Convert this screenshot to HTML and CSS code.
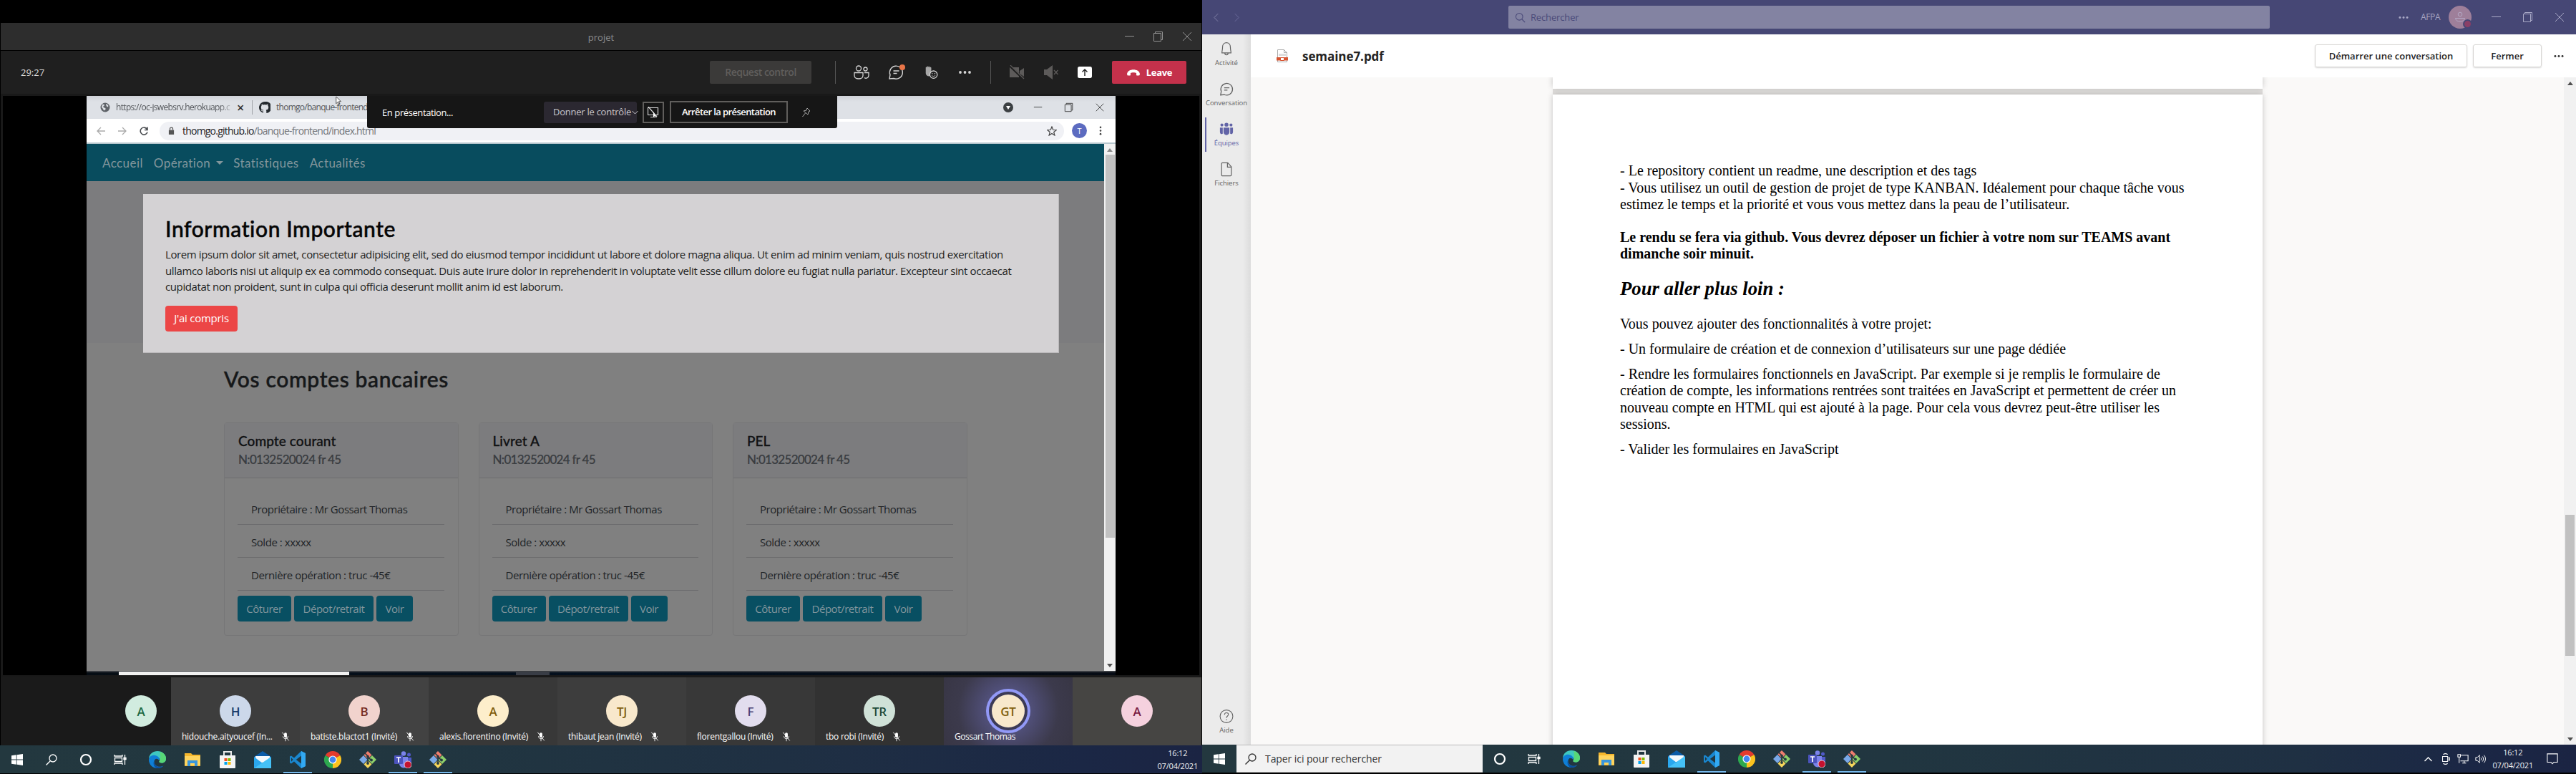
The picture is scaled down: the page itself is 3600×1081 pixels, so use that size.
FILE: index.html
```html
<!DOCTYPE html>
<html lang="fr">
<head>
<meta charset="utf-8">
<title>projet</title>
<link rel="stylesheet" href="styles.css">
</head>
<body>
<svg class="defs" width="0" height="0" aria-hidden="true">
  <symbol id="win" viewBox="0 0 16 16"><path d="M0 2.2 6.8 1.3v6.2H0zM7.6 1.2 16 0v7.5H7.6zM0 8.4h6.8v6.3L0 13.8zM7.6 8.4H16V16l-8.4-1.2z" fill="currentColor"/></symbol>
  <symbol id="ring" viewBox="0 0 18 18"><circle cx="9" cy="9" r="7" fill="none" stroke="currentColor" stroke-width="2.2"/></symbol>
  <symbol id="taskview" viewBox="0 0 18 18"><path d="M1 2v2h11V2M1 16v-2h11v2M1.500 6.500h10v5h-10zM15.500 2v14M14 6.500h3v2h-3z" fill="none" stroke="currentColor" stroke-width="1.300"/></symbol>
  <symbol id="search" viewBox="0 0 18 18"><circle cx="11" cy="7" r="5" fill="none" stroke="currentColor" stroke-width="1.300"/><path d="M7.300 10.800 1.500 16.500" stroke="currentColor" stroke-width="1.400"/></symbol>
  <symbol id="search-r" viewBox="0 0 18 18"><circle cx="7.500" cy="7.500" r="5.800" fill="none" stroke="currentColor" stroke-width="1.300"/><path d="m12 12 5 5" stroke="currentColor" stroke-width="1.300"/></symbol>
  <symbol id="edge" viewBox="0 0 24 24"><path d="M12 0c7 0 12 5 12 10.500 0 4-3 6-6 6-2.500 0-3.800-1-3.500-2 1.500-2 .8-5.500-3-5.500C6 9 2 12 .2 9.500 1 4 6 0 12 0z" fill="#3fc8c0"/><path d="M15 1c6 1 9 5 9 9.500 0 4-3 6-6 6-2.500 0-3.800-1-3.500-2 1.500-2 2.500-8 .5-13.500z" fill="#58d776"/><path d="M0 12C.5 7 5 5 9 6c4 .8 6.500 4 5.500 7-3-4-7-2.500-7 2 0 5 6 9 13 5.500C18 23 15 24 12 24 5 24 0 18.500 0 12z" fill="#0f7fd6"/><path d="M8 12c-2 3 0 9 6 10 3 .4 5.500-.5 7-1.800C18 23 15 24 12 24c-5-1-7-7-4-12z" fill="#0c4f9e"/></symbol>
  <symbol id="folder" viewBox="0 0 22 20"><path d="M0 1h9l2 2h11v16H0z" fill="#f5b62c"/><path d="M0 5h22v13H0z" fill="#ffd45e"/><path d="M4 11h14v8h-4v-4H8v4H4z" fill="#3a96dd"/></symbol>
  <symbol id="store" viewBox="0 0 22 24"><path d="M6 6V1h10v5" fill="none" stroke="#e8e8e8" stroke-width="2"/><path d="M0 6h22v17a1 1 0 0 1-1 1H1a1 1 0 0 1-1-1z" fill="#f4f4f4"/><path d="M6.500 10h4v4h-4z" fill="#f25022"/><path d="M11.500 10h4v4h-4z" fill="#7fba00"/><path d="M6.500 15h4v4h-4z" fill="#00a4ef"/><path d="M11.500 15h4v4h-4z" fill="#ffb900"/></symbol>
  <symbol id="mail" viewBox="0 0 24 24"><path d="M0 8 12 0l12 8v5H0z" fill="#0a5ba8"/><path d="M2 7h20v9H2z" fill="#f3f8fc"/><path d="M0 8l12 9 12-9v16H0z" fill="#2aa7ee"/><path d="M0 24 24 8v16z" fill="#45c1f7"/></symbol>
  <symbol id="vscode" viewBox="0 0 24 24"><path d="M17 0 7 9.500 3 6.400 1 7.400v9.200l2 1 4-3.100L17 24l6-3V3zm0 6.500v11L9.800 12zM3 9.300 5.600 12 3 14.700z" fill="#1a87cf" fill-rule="evenodd"/><path d="m17 0 6 3v18l-6 3z" fill="#32a9f2"/></symbol>
  <symbol id="chrome" viewBox="0 0 24 24"><path d="M12 12 1.600 6A12 12 0 0 1 22.400 6z" fill="#e33b2e"/><path d="M12 12 22.400 6A12 12 0 0 1 12 24z" fill="#fcc31e"/><path d="M12 12v12A12 12 0 0 1 1.600 6z" fill="#2da94f"/><circle cx="12" cy="12" r="5.600" fill="#fff"/><circle cx="12" cy="12" r="4.400" fill="#4285f4"/></symbol>
  <symbol id="git" viewBox="0 0 24 24"><path d="m12 0 5.500 5.500L12 11 6.500 5.500z" fill="#f07e6e"/><path d="m6 6 5.500 6L6 18 0 12z" fill="#7ba9e8"/><path d="m18 6 6 6-6 6-5.500-6z" fill="#8ecf6a"/><path d="m12 13 5.500 5.500L12 24l-5.500-5.500z" fill="#f5d65c"/><path d="M8 3l4 4v11M12 8l5 5" fill="none" stroke="#263a42" stroke-width="1.700"/><circle cx="12" cy="7.500" r="1.800" fill="#263a42"/><circle cx="12" cy="17" r="1.900" fill="#263a42"/><circle cx="17" cy="12.500" r="1.900" fill="#263a42"/></symbol>
  <symbol id="teams" viewBox="0 0 24 24"><circle cx="13" cy="3.500" r="3.200" fill="#7b83eb"/><circle cx="20.500" cy="5" r="2.500" fill="#5059c9"/><path d="M16 9h8v7a4 4 0 0 1-8 2z" fill="#5059c9"/><path d="M7 8h12v9a6 6 0 0 1-12 1z" fill="#7b83eb"/><rect y="6" width="12" height="12" rx="1" fill="#4b53bc"/><path d="M3 9h6M6 9v7" stroke="#fff" stroke-width="1.700"/><circle cx="19" cy="19" r="5" fill="#c4122f" stroke="#e9c3cb"/></symbol>
  <symbol id="ie" viewBox="0 0 24 24"><path d="M20 15.500A8.300 8.300 0 1 1 20.300 12H8" fill="none" stroke="#3fbcf2" stroke-width="4"/><path d="M2 22C-1 17 10 3 21 1.500c3 0 2.500 3 1.500 5" fill="none" stroke="#f5c62d" stroke-width="1.800"/></symbol>
  <symbol id="outlook" viewBox="0 0 22 22"><path d="M10 5h12v12H10z" fill="#fff"/><path d="m13 9 3 4 5-6" fill="none" stroke="#0a6cc8" stroke-width="1.500"/><path d="M0 3 13 0v22L0 19z" fill="#0a6cc8"/><ellipse cx="6.500" cy="11" rx="3" ry="3.800" fill="none" stroke="#fff" stroke-width="1.800"/></symbol>
  <symbol id="skype" viewBox="0 0 22 22"><circle cx="7" cy="7" r="6.500" fill="#14a8ec"/><circle cx="15" cy="15" r="6.500" fill="#14a8ec"/><circle cx="11" cy="11" r="9" fill="#14a8ec"/><path d="M15 7.500C13 5 7.500 5.500 7.500 8.300c0 3.700 7.500 1.700 7.500 5.200 0 3-6 3.500-8.300.5" fill="none" stroke="#fff" stroke-width="2.500"/></symbol>
  <symbol id="firefox" viewBox="0 0 22 22"><circle cx="11" cy="11" r="10.500" fill="#e66000"/><circle cx="12" cy="8.500" r="7.500" fill="#2b7fd0"/><path d="M1 6c1 2 3 1 5 1l3 3c-2 1-1 4 2 4 4 1 8-1 8-6l1-3c3 8 0 16-9 16.500C2 21.500-1 13 1 6z" fill="#f58a1c"/></symbol>
  <symbol id="micoff" viewBox="0 0 14 18"><rect x="4.500" y="1.500" width="5" height="9" rx="2.500" fill="currentColor"/><path d="M2.500 8c0 6 9 6 9 0M7 12.500V17M1 1l12 15" fill="none" stroke="currentColor" stroke-width="1.200"/></symbol>
  <symbol id="min" viewBox="0 0 16 16"><path d="M1 7.500h13" stroke="currentColor"/></symbol>
  <symbol id="restore" viewBox="0 0 16 16"><path d="M1.500 3.500h10v11h-10zM3.500 3V1.500h10v11H12" fill="none" stroke="currentColor"/></symbol>
  <symbol id="close" viewBox="0 0 16 16"><path d="m2 2 12 12M14 2 2 14" stroke="currentColor"/></symbol>
  <symbol id="dots" viewBox="0 0 18 6"><circle cx="2.500" cy="3" r="1.900"/><circle cx="9" cy="3" r="1.900"/><circle cx="15.500" cy="3" r="1.900"/></symbol>
  <symbol id="chat" viewBox="0 0 22 22"><path d="M2 20l1-5.500A9 9 0 1 1 8 19.500zM7.500 9h8M7.500 12.500h5" fill="none" stroke="currentColor" stroke-width="1.400"/></symbol>
  <symbol id="up" viewBox="0 0 12 8"><path d="m1 7 5-5 5 5" fill="none" stroke="currentColor" stroke-width="1.300"/></symbol>
  <symbol id="net" viewBox="0 0 18 16"><path d="M5 2h12v9H5M8 14.500h6M11 11v3.500M1 1h4v4H1zM3 5v9.500" fill="none" stroke="currentColor" stroke-width="1.200"/></symbol>
  <symbol id="vol" viewBox="0 0 18 16"><path d="M1 5.500h2.500L7 2v12l-3.500-3.500H1zM9 6c1 1 1 3 0 4M11.500 4c2 2 2 6 0 8M14 2c3 3 3 9 0 12" fill="none" stroke="currentColor" stroke-width="1.100"/></symbol>
</svg>

<div class="desk">
  <section class="screen left">
    <div class="void"></div>
    <div class="meeting">
      <header class="mtitle"><span></span><span>projet</span>
        <div class="wbtns"><svg><use href="#min"/></svg><svg><use href="#restore"/></svg><svg><use href="#close"/></svg></div>
      </header>
      <div class="mtools">
        <span class="timer">29:27</span>
        <button class="request">Request control</button>
        <div class="mgroup">
          <svg viewBox="0 0 22 20"><g fill="none" stroke="currentColor" stroke-width="1.300"><circle cx="7" cy="4.500" r="3.500"/><circle cx="16.500" cy="5.500" r="2.500"/><path d="M1 10.500h12v4c0 6-12 6-12 0zM15 10.500h6v4c0 3.500-4 4.500-6 3"/></g></svg>
          <svg class="w24" viewBox="0 0 26 22"><use href="#chat" width="22" height="22"/><circle cx="20" cy="4" r="4" fill="#e97548"/></svg>
          <svg viewBox="0 0 22 22"><path d="M3 12V4c0-1.500 2-1.500 2 0 0-3 2-3 2-.5 0-2.500 2.500-2 2.500.5 0-1.500 2-1 2 .5V9l-3 8C5 17 3 15 3 12z" fill="currentColor" opacity=".75"/><circle cx="15" cy="14.500" r="5.700" fill="#1f1f1f" stroke="currentColor" stroke-width="1.400"/><path d="M12.500 15.500c1 2.500 4 2.500 5 0" fill="none" stroke="currentColor"/><circle cx="13" cy="13" r=".8" fill="currentColor"/><circle cx="17" cy="13" r=".8" fill="currentColor"/></svg>
          <svg class="mdots"><use href="#dots" fill="#d6d6d6"/></svg>
        </div>
        <div class="mgroup g2">
          <svg class="off" viewBox="0 0 22 20"><path d="M1 3h13v14H1zM15 8l6-4v12l-6-4z" fill="currentColor"/><path d="m1 1 19 18" stroke="#1f1f1f" stroke-width="3"/><path d="m2 0 19 19" stroke="currentColor" stroke-width="1.200"/></svg>
          <svg class="off" viewBox="0 0 22 20"><path d="M1 6h4l8-6v20l-8-6H1z" fill="currentColor"/><path d="m15 7 5.500 6M20.500 7 15 13" stroke="currentColor" stroke-width="1.300"/></svg>
          <svg class="share" viewBox="0 0 20 16"><rect width="20" height="16" rx="2.500" fill="#fff"/><path d="M10 13V4M6.500 7.500 10 4l3.500 3.500" fill="none" stroke="#1f1f1f" stroke-width="1.400"/></svg>
        </div>
        <button class="leave"><svg viewBox="0 0 20 10"><path d="M0 7C1-2 19-2 20 7l-.5 2c-.3.800-5 .8-5-.5V5.500c-2-1.200-7-1.200-9 0V8.500c0 1.300-4.700 1.300-5 .5z" fill="#fff"/></svg>Leave</button>
      </div>
      <div class="stage">
        <div class="presenter">Gossart Thomas</div>
        <div class="shared">
          <div class="tabs">
            <div class="tab t1"><svg viewBox="0 0 14 14"><circle cx="7" cy="7" r="6.500" fill="#5f6368"/><path d="M3 3c3-1 4 1 2 2s0 2 2 3-1 4-2 3-1-3-3-4zM8 2c3 1 4 3 3 4s-3-1-3-4z" fill="#dee1e6"/></svg><span>https://oc-jswebsrv.herokuapp.c</span><b>×</b></div>
            <div class="tab t2"><svg viewBox="0 0 16 16"><path d="M8 0a8 8 0 0 0-2.500 15.600c.4 0 .5-.2.500-.5v-1.600c-2 .4-2.700-1-2.900-1.600-.3-.5-.7-.9-.2-1 1 0 1.500 1.500 2.500 1.600.5 0 .8-.2.900-.7-2-.4-3.500-1-3.500-4 0-.9.300-1.600.8-2.200-.2-.7 0-1.500.2-2.100.800 0 1.500.4 2.100.9a8 8 0 0 1 4.200 0c.6-.5 1.300-.9 2.100-.9.200.6.300 1.400.1 2.100.6.600.9 1.300.9 2.200 0 3-1.600 3.600-3.500 4 .4.400.6 1 .6 1.700v2c0 .3.200.6.500.5A8 8 0 0 0 8 0z" fill="#24292e"/></svg><span>thomgo/banque-frontend</span></div>
            <div class="cwin"><svg class="drop" viewBox="0 0 14 14"><circle cx="7" cy="7" r="7" fill="#3c4043"/><path d="M4 5h6l-3 5z" fill="#fff"/></svg><svg><use href="#min"/></svg><svg><use href="#restore"/></svg><svg><use href="#close"/></svg></div>
            <div class="banner">
              <span class="bp">En présentation...</span>
              <span class="give">Donner le contrôle<svg viewBox="0 0 8 6"><path d="m0 1 4 4 4-4" fill="none" stroke="currentColor"/></svg></span>
              <span class="noscreen"><svg viewBox="0 0 16 16"><path d="M.5 1.500h14v10H.5zM4 14.500h7M1 0l12 14" fill="none" stroke="#ddd" stroke-width="1.200"/><path d="M8 7v8l2-2 3 3z" fill="#fff"/></svg></span>
              <span class="stop">Arrêter la présentation</span>
              <svg class="pin" viewBox="0 0 12 14"><path d="m7 1 4 4-2 1-1 4-6-5 4-1zM4.500 8 .5 13" fill="none" stroke="#aaa"/></svg>
            </div>
            <svg class="cursor" viewBox="0 0 12 18"><path d="M1 1v13l3-3 2 5 2-1-2-5h4z" fill="#fff" stroke="#222"/></svg>
          </div>
          <div class="urlbar">
            <svg class="dim" viewBox="0 0 12 12"><path d="M12 6H1M6 1 1 6l5 5" fill="none" stroke="currentColor" stroke-width="1.300"/></svg>
            <svg class="dim" viewBox="0 0 12 12"><path d="M0 6h11M6 1l5 5-5 5" fill="none" stroke="currentColor" stroke-width="1.300"/></svg>
            <svg viewBox="0 0 12 12"><path d="M10.500 3.500A5 5 0 1 0 11 7.500M11 .5v4H7" fill="none" stroke="currentColor" stroke-width="1.600"/></svg>
            <div class="url"><svg viewBox="0 0 10 12"><path d="M1 5h8v7H1z" fill="currentColor"/><path d="M2.800 5V3c0-2.500 4.400-2.500 4.400 0v2" fill="none" stroke="currentColor" stroke-width="1.400"/></svg><span>thomgo.github.io<i>/banque-frontend/index.html</i></span><svg class="star" viewBox="0 0 14 14"><path d="m7 1 1.700 4.300 4.500.3-3.500 2.900 1.200 4.500L7 10.500 3.100 13l1.200-4.500L.8 5.600l4.500-.3z" fill="none" stroke="currentColor" stroke-width="1.200"/></svg></div>
            <span class="user">T</span>
            <svg class="kebab" viewBox="0 0 4 14"><circle cx="2" cy="2" r="1.400"/><circle cx="2" cy="7" r="1.400"/><circle cx="2" cy="12" r="1.400"/></svg>
          </div>
          <div class="web">
            <div class="site">
              <nav class="nav"><a>Accueil</a><a>Opération</a><i class="caret"></i><a>Statistiques</a><a>Actualités</a></nav>
              <div class="hero">
                <div class="modal">
                  <h1>Information Importante</h1>
                  <p><span>Lorem ipsum dolor sit amet, consectetur adipisicing elit, sed do eiusmod tempor incididunt ut labore et dolore magna aliqua. Ut enim ad minim veniam, quis nostrud exercitation</span><br>ullamco laboris nisi ut aliquip ex ea commodo consequat. Duis aute irure dolor in reprehenderit in voluptate velit esse cillum dolore eu fugiat nulla pariatur. Excepteur sint occaecat<br>cupidatat non proident, sunt in culpa qui officia deserunt mollit anim id est laborum.</p>
                  <button>J'ai compris</button>
                </div>
              </div>
              <div class="accounts">
                <h1>Vos comptes bancaires</h1>
                <div class="cards">
                  <article><header><h2>Compte courant</h2><h3>N:0132520024 fr 45</h3></header><ul><li>Propriétaire : Mr Gossart Thomas</li><li>Solde : xxxxx</li><li>Dernière opération : truc -45€</li></ul><div class="acts"><button>Côturer</button><button>Dépot/retrait</button><button>Voir</button></div></article>
                  <article><header><h2>Livret A</h2><h3>N:0132520024 fr 45</h3></header><ul><li>Propriétaire : Mr Gossart Thomas</li><li>Solde : xxxxx</li><li>Dernière opération : truc -45€</li></ul><div class="acts"><button>Côturer</button><button>Dépot/retrait</button><button>Voir</button></div></article>
                  <article><header><h2>PEL</h2><h3>N:0132520024 fr 45</h3></header><ul><li>Propriétaire : Mr Gossart Thomas</li><li>Solde : xxxxx</li><li>Dernière opération : truc -45€</li></ul><div class="acts"><button>Côturer</button><button>Dépot/retrait</button><button>Voir</button></div></article>
                </div>
              </div>
            </div>
            <div class="sbar"><i class="tri-up"></i><i class="thumb"></i><i class="tri-down"></i></div>
          </div>
          <div class="stask">
            <span class="sstart"><svg><use href="#win"/></svg></span>
            <div class="ssearch"><svg class="cort"><use href="#ring"/></svg><span>Taper ici pour rechercher</span><svg class="mic" viewBox="0 0 12 18"><rect x="3" y="1" width="6" height="11" rx="1.500" fill="none" stroke="#333" stroke-width="1.200"/><path d="M1 10v2c0 3 10 3 10 0v-2M6 14v3M3 17h6" fill="none" stroke="#333" stroke-width="1.200"/></svg></div>
            <div class="sapps"><span><svg class="s16"><use href="#taskview"/></svg></span><span><svg><use href="#folder"/></svg></span><span><svg><use href="#ie"/></svg></span><span><svg><use href="#outlook"/></svg></span><span><svg><use href="#skype"/></svg></span><span class="active"><svg><use href="#chrome"/></svg></span><span class="open"><svg><use href="#firefox"/></svg></span></div>
            <div class="stray">
              <svg viewBox="0 0 14 16"><path d="M1 15c0-6 6-6 6 0M7 8c0-5 6-5 6 1" fill="none" stroke="currentColor" stroke-width="1.200"/><circle cx="4" cy="8.500" r="2" fill="none" stroke="currentColor"/><circle cx="10" cy="3" r="2" fill="none" stroke="currentColor"/></svg>
              <svg class="chev"><use href="#up"/></svg>
              <svg viewBox="0 0 16 12"><path d="M3 11.500a3 3 0 0 1-.5-5.800A5 5 0 0 1 11.500 4c2.500 0 4 2 4 4s-1 3.500-3 3.500z" fill="#1c86e0"/></svg>
              <svg viewBox="0 0 16 14"><path d="M1 1v5h3V1M2.500 6v5" stroke="currentColor" fill="none"/><path d="M5 4h9v8H4V8h1z" fill="#fff"/></svg>
              <svg><use href="#net"/></svg><svg><use href="#vol"/></svg>
              <div class="clock"><span>16:12</span><span>07/04/2021</span></div>
              <div class="notif"><svg viewBox="0 0 16 16"><path d="M0 0h15v12H7l-3 4v-4H0z" fill="#fff"/><path d="M2.500 3h10M2.500 6h10M2.500 9h6" stroke="#111"/></svg><b>1</b></div>
            </div>
          </div>
        </div>
        <div class="side"></div>
      </div>
      <div class="people">
        <div class="p self"><span class="av green">A</span></div>
        <div class="p a"><span class="av blue">H</span><label>hidouche.aityoucef (In...<svg><use href="#micoff"/></svg></label></div>
        <div class="p b"><span class="av red">B</span><label>batiste.blactot1 (Invité)<svg><use href="#micoff"/></svg></label></div>
        <div class="p c"><span class="av yel">A</span><label>alexis.fiorentino (Invité)<svg><use href="#micoff"/></svg></label></div>
        <div class="p a"><span class="av tan">TJ</span><label>thibaut jean (Invité)<svg><use href="#micoff"/></svg></label></div>
        <div class="p c"><span class="av lil">F</span><label>florentgallou (Invité)<svg><use href="#micoff"/></svg></label></div>
        <div class="p d"><span class="av mint">TR</span><label>tbo robi (Invité)<svg><use href="#micoff"/></svg></label></div>
        <div class="p talk"><span class="av tan">GT</span><label>Gossart Thomas</label></div>
        <div class="p last"><span class="av pink">A</span></div>
      </div>
    </div>
    <footer class="task">
      <span class="tb"><svg class="i16"><use href="#win"/></svg></span><span class="tb"><svg class="i18"><use href="#search"/></svg></span><span class="tb"><svg class="i18"><use href="#ring"/></svg></span><span class="tb"><svg class="i18"><use href="#taskview"/></svg></span>
      <div class="apps"><span><svg><use href="#edge"/></svg></span><span><svg><use href="#folder"/></svg></span><span><svg><use href="#store"/></svg></span><span><svg><use href="#mail"/></svg></span><span class="open"><svg><use href="#vscode"/></svg></span><span><svg><use href="#chrome"/></svg></span><span><svg><use href="#git"/></svg></span><span class="open"><svg><use href="#teams"/></svg></span><span class="open"><svg><use href="#git"/></svg></span></div>
      <div class="clock end"><span>16:12</span><span>07/04/2021</span></div>
    </footer>
  </section>

  <section class="screen right">
    <header class="thead">
      <svg class="nv" viewBox="0 0 8 14"><path d="M7 1 1 7l6 6" fill="none" stroke="#8b8bb0"/></svg>
      <svg class="nv dimnv" viewBox="0 0 8 14"><path d="m1 1 6 6-6 6" fill="none" stroke="#7272a0"/></svg>
      <div class="find"><svg><use href="#search-r"/></svg>Rechercher</div>
      <svg class="hdots"><use href="#dots" fill="#a9a9c6"/></svg>
      <span class="org">AFPA</span>
      <span class="me"><svg viewBox="0 0 16 16"><circle cx="8" cy="4" r="2.800" fill="none" stroke="#b4a8c4"/><path d="M1.500 9.500h13c0 6-13 6-13 0z" fill="none" stroke="#b4a8c4"/></svg><i></i></span>
      <div class="wbtns tw"><svg><use href="#min"/></svg><svg><use href="#restore"/></svg><svg><use href="#close"/></svg></div>
    </header>
    <div class="tbody">
      <aside class="rail">
        <a><svg viewBox="0 0 22 22"><path d="M4 17c0-3 1-4 1-9 0-9 12-9 12 0 0 5 1 6 1 9zM8.500 17c0 4 5 4 5 0" fill="none" stroke="currentColor" stroke-width="1.300"/></svg>Activité</a>
        <a><svg><use href="#chat"/></svg>Conversation</a>
        <a class="on"><svg viewBox="0 0 22 22"><g fill="currentColor"><circle cx="11" cy="4" r="3"/><circle cx="4" cy="4.500" r="2.300"/><circle cx="18" cy="4.500" r="2.300"/><path d="M6.500 8.500h9v7c0 6-9 6-9 0zM1 8.500h4.300V18C3 19 1 18 1 15zM16.700 8.500H21V15c0 3-2 4-4.300 3z"/></g></svg>Équipes</a>
        <a><svg viewBox="0 0 22 22"><path d="M3.500 2.500q0-1.500 1.500-1.500h8l5.500 6v12.500q0 1.500-1.500 1.500H5q-1.500 0-1.500-1.500zM12.500 1v6.500h6" fill="none" stroke="currentColor" stroke-width="1.300"/></svg>Fichiers</a>
        <a class="help"><svg viewBox="0 0 22 22"><circle cx="11" cy="11" r="9.800" fill="none" stroke="currentColor" stroke-width="1.200"/><path d="M8 8.500c0-4 6-4 6-.5 0 2.500-3 2.500-3 5.500M11 15.500v1.500" fill="none" stroke="currentColor" stroke-width="1.200"/></svg>Aide</a>
      </aside>
      <main class="doc">
        <div class="dhead">
          <svg viewBox="0 0 16 18"><path d="M1.500.5h9l4 4v13h-13zM10.500.5v4h4" fill="#fff" stroke="#aaa"/><path d="M3 6h10v3H3z" fill="#ddd"/><path d="M0 11h16v4.500H0z" fill="#d65532"/><path d="M5.500 11.500h5v4h-5z" fill="#fff" stroke="#d65532"/></svg>
          <h4>semaine7.pdf</h4>
          <button class="wide">Démarrer une conversation</button><button>Fermer</button>
          <svg class="ddots"><use href="#dots" fill="#333"/></svg>
        </div>
        <div class="viewer">
          <div class="pages">
            <div class="sheet prev"></div>
            <div class="sheet cur">
              <p>- Le repository contient un readme, une description et des tags</p>
              <p>- Vous utilisez un outil de gestion de projet de type KANBAN. Idéalement pour chaque tâche vous<br>estimez le temps et la priorité et vous vous mettez dans la peau de l’utilisateur.</p>
              <p class="bold">Le rendu se fera via github. Vous devrez déposer un fichier à votre nom sur TEAMS avant<br>dimanche soir minuit.</p>
              <h5>Pour aller plus loin :</h5>
              <p class="sp">Vous pouvez ajouter des fonctionnalités à votre projet:</p>
              <p class="sp">- Un formulaire de création et de connexion d’utilisateurs sur une page dédiée</p>
              <p class="sp">- Rendre les formulaires fonctionnels en JavaScript. Par exemple si je remplis le formulaire de<br>création de compte, les informations rentrées sont traitées en JavaScript et permettent de créer un<br>nouveau compte en HTML qui est ajouté à la page. Pour cela vous devrez peut-être utiliser les<br>sessions.</p>
              <p class="sp">- Valider les formulaires en JavaScript</p>
            </div>
          </div>
          <div class="vbar"><i class="tri-up"></i><i class="thumb"></i><i class="tri-down"></i></div>
        </div>
      </main>
    </div>
    <footer class="task rt">
      <span class="tb"><svg class="i16"><use href="#win"/></svg></span>
      <div class="tsearch"><svg><use href="#search"/></svg>Taper ici pour rechercher</div>
      <span class="tb"><svg class="i18"><use href="#ring"/></svg></span><span class="tb"><svg class="i18"><use href="#taskview"/></svg></span>
      <div class="apps"><span><svg><use href="#edge"/></svg></span><span><svg><use href="#folder"/></svg></span><span><svg><use href="#store"/></svg></span><span><svg><use href="#mail"/></svg></span><span class="open"><svg><use href="#vscode"/></svg></span><span><svg><use href="#chrome"/></svg></span><span><svg><use href="#git"/></svg></span><span class="open"><svg><use href="#teams"/></svg></span><span class="open"><svg><use href="#git"/></svg></span></div>
      <div class="tray">
        <svg class="chev"><use href="#up"/></svg>
        <svg viewBox="0 0 14 18"><path d="M2 5h8v8H2zM10 8l3-1v4l-3-1M3 2c2-1.500 5-1.500 7 0M3 16c2 1.500 5 1.500 7 0" fill="none" stroke="currentColor" stroke-width="1.200"/></svg>
        <svg><use href="#net"/></svg><svg><use href="#vol"/></svg>
        <div class="clock"><span>16:12</span><span>07/04/2021</span></div>
        <svg class="note" viewBox="0 0 18 18"><path d="M1 1h16v13h-5.500L9 16.500 6.500 14H1z" fill="none" stroke="currentColor" stroke-width="1.200"/></svg>
      </div>
    </footer>
  </section>
</div>
</body>
</html>
```
FILE: styles.css
```css
* { box-sizing: border-box; margin: 0; padding: 0; }
body { background: #000; font-family: "Open Sans", "Noto Sans", sans-serif; font-size: 13px; line-height: 1; }
i, label { font-style: normal; }
button { border: 0; background: none; font: inherit; color: inherit; }
svg { display: block; flex: none; width: 16px; height: 16px; }
svg.defs { position: absolute; width: 0; height: 0; }
span { white-space: nowrap; }
.desk { display: grid; grid-template-columns: 1680px 1920px; width: 3600px; height: 1081px; overflow: hidden; }
.screen { display: flex; flex-direction: column; height: 1081px; min-width: 0; }

/* meeting window */
.void { height: 32px; }
.meeting { height: 1009px; padding: 0 1px; display: flex; flex-direction: column; }
.mtitle { height: 38px; margin-bottom: 1px; background: #2d2d2d; display: grid; grid-template-columns: 1fr auto 1fr; align-items: center; color: #8b8b8b; }
.mtitle > span { padding-top: 2px; }
.wbtns { display: flex; justify-content: flex-end; gap: 24px; padding-right: 12px; color: #929292; }
.mtools { height: 63px; background: #1f1f1f; border-bottom: 3px solid #191919; display: flex; align-items: center; }
.timer { padding-left: 28px; color: #ddd; }
.request { margin-left: auto; width: 142px; height: 32px; background: #3b3a39; color: #605e5c; font-weight: 600; font-size: 14px; letter-spacing: -.5px; border-radius: 2px; }
.mgroup { display: flex; align-items: center; height: 32px; margin-left: 33px; border-left: 1px solid #555; padding-left: 25px; gap: 26px; color: #d6d6d6; width: 217px; }
.mgroup svg { width: 22px; height: 20px; }
.mgroup svg.w24 { width: 26px; height: 22px; margin-right: -3px; }
.mgroup svg.mdots { width: 19px; height: 6px; margin-left: 1px; }
.mgroup.g2 { margin-left: 0; width: 170px; }
.mgroup .off { color: #5d5b5a; }
.mgroup .share { width: 20px; height: 16px; }
.leave { display: flex; align-items: center; justify-content: center; gap: 8px; margin-right: 21px; width: 104px; height: 32px; background: #c4314b; color: #fff; font-weight: 700; border-radius: 2px; letter-spacing: -.29px; }
.leave svg { width: 20px; height: 9px; }
.stage { height: 809px; display: grid; grid-template-columns: 117px 1438px 117px; background: #000; border: solid #191919; border-width: 0 3px; }
.presenter { align-self: end; padding: 0 0 12px 14px; color: #fff; font-size: 12px; letter-spacing: -.43px; white-space: nowrap; line-height: 14px; }
.shared { display: flex; flex-direction: column; min-width: 0; }

/* shared browser */
.tabs { position: relative; height: 32px; background: linear-gradient(#cfd2d8, #dee1e6 8px); display: flex; align-items: center; color: #53565a; font-size: 12px; padding-left: 19px; }
.tab { display: flex; align-items: center; height: 20px; }
.tab svg { width: 14px; height: 14px; margin-right: 8px; }
.t1 { width: 213px; border-right: 1px solid #a0a3a8; letter-spacing: -.67px; }
.t1 span { width: 165px; -webkit-mask: linear-gradient(90deg, #000 88%, transparent); mask: linear-gradient(90deg, #000 88%, transparent); }
.t1 b { font-size: 18px; font-weight: 600; color: #333; padding-left: 4px; }
.t2 { padding-left: 9px; letter-spacing: -.73px; }
.tab.t2 svg { width: 16px; height: 16px; }
.cwin { margin-left: auto; display: flex; align-items: center; gap: 27px; padding-right: 14px; color: #333; }
.cwin .drop { width: 14px; height: 14px; }
.cwin svg { width: 16px; height: 14px; }
.banner { position: absolute; left: 392px; top: 0; width: 657px; height: 45px; background: #161616; border-radius: 0 0 3px 3px; display: flex; align-items: center; color: #fff; font-size: 13px; z-index: 2; letter-spacing: -.41px; }
.bp { width: 247px; padding-left: 21px; padding-top: 2px; }
.give { width: 130px; height: 30px; padding-left: 13px; background: #2b2831; color: #c8c6cb; display: flex; align-items: center; border-radius: 3px; letter-spacing: -.25px; }
.give svg { width: 9px; height: 6px; margin-left: 1px; }
.noscreen { width: 30px; height: 30px; margin-left: 8px; border: 2px solid #605e5c; display: flex; align-items: center; justify-content: center; }
.stop { width: 165px; height: 31px; margin-left: 8px; border: 2px solid #605e5c; display: flex; align-items: center; justify-content: center; font-weight: 600; letter-spacing: -.58px; }
.pin { width: 12px; height: 14px; margin-left: 20px; }
.cursor { position: absolute; left: 348px; top: 0; width: 9px; height: 14px; z-index: 3; }
.urlbar { height: 33px; background: #fff; display: flex; align-items: center; padding-left: 14px; color: #4a4d51; }
.urlbar > svg { width: 12px; height: 12px; margin-right: 18px; }
.urlbar .dim { color: #aaa; }
.url { width: 1264px; height: 26px; margin-left: -2px; border-radius: 13px; background: #f0f1f5; display: flex; align-items: center; padding-left: 12px; font-size: 14px; letter-spacing: -.79px; color: #202124; }
.url svg:first-child { width: 9px; height: 11px; margin-right: 11px; color: #555; }
.url i { color: #73767b; }
.url .star { width: 14px; height: 14px; margin: 0 10px 0 auto; color: #444; }
.user { width: 21px; height: 21px; border-radius: 50%; background: #5c6bc0; color: #fff; margin-left: 11px; display: grid; place-items: center; font-size: 11px; }
.urlbar .kebab { width: 4px; height: 13px; margin: 0 0 0 17px; fill: #444; }
.web { height: 738px; display: grid; grid-template-columns: 1422px 16px; border-top: 2px solid #b6c6cd; }
.site { background: #808080; overflow: hidden; font-size: 15px; }
.nav { height: 52px; background: #084c5e; display: flex; align-items: center; padding-left: 22px; font: 17px Lato, sans-serif; letter-spacing: .42px; color: #82969c; }
.nav a { margin-right: 15px; }
.caret { border: 5px solid transparent; border-top-color: #82969c; border-bottom: 0; margin: 0 14px 0 -7px; }
.hero { background: #7c7c7e; height: 226px; padding: 18px 63px 0 79px; }
.modal { position: relative; height: 222px; background: #d4d2d4; padding: 28px 31px 0; border: 1px solid #bab8ba; border-width: 0 1px 1px 0; }
h1 { font: 500 30px/40px Lato, sans-serif; letter-spacing: .58px; -webkit-text-stroke: .5px; color: #050505; }
.modal p { margin-top: 5px; line-height: 22.5px; letter-spacing: -.39px; color: #1d1e20; white-space: nowrap; }
.modal button { margin-top: 15px; display: block; width: 101px; height: 36px; border-radius: 4px; background: #ec4646; color: #fff; letter-spacing: -.26px; }
.accounts { padding: 30px 0 0 192px; }
.accounts h1 { color: #16181a; letter-spacing: .65px; }
.cards { display: flex; gap: 28px; margin-top: 41px; }
.cards article { width: 327.500px; height: 298px; border: 1px solid #767677; border-radius: 4px; }
.cards header { height: 77px; background: #7c7c7e; border-bottom: 1px solid #6d6d6f; padding: 13px 19px 0; }
h2 { font: 500 19px/24px Lato, sans-serif; color: #111214; -webkit-text-stroke: .3px; letter-spacing: .08px; }
h3 { font: 500 17px/22px Lato, sans-serif; color: #3a3d41; padding-top: 3px; letter-spacing: -.71px; -webkit-text-stroke: .2px; }
.cards ul { list-style: none; margin: 19px 19px 0 18px; }
.cards li { height: 46px; padding: 1px 0 0 19px; line-height: 46px; border-bottom: 1px solid #6c6c6e; letter-spacing: -.45px; color: #212427; }
.acts { display: flex; gap: 4px; padding: 7px 0 0 18px; }
.acts button { height: 36px; width: 75px; border-radius: 4px; background: #084f62; color: #83969d; letter-spacing: -.45px; }
.acts button:nth-child(2) { width: 111px; }
.acts button:nth-child(3) { width: 51px; }
.sbar, .vbar { background: #f1f1f1; display: flex; flex-direction: column; align-items: center; }
.tri-up, .tri-down { border: 4px solid transparent; }
.tri-up { border-bottom: 5px solid #888; border-top: 0; margin-top: 6px; }
.tri-down { border-top: 5px solid #505050; border-bottom: 0; margin-top: auto; margin-bottom: 5px; }
.sbar .thumb { width: 13px; height: 535px; margin-top: 4px; background: #c1c1c1; }
.stask { flex: 1; background: linear-gradient(90deg, #060d14, #04101e 50%, #060b14); border-top: 2px solid #3a3d42; display: flex; color: #e8e8e8; }
.sstart { width: 45px; display: grid; place-items: center; }
.sstart svg { width: 15px; height: 15px; }
.ssearch { width: 322px; margin-top: -1px; background: #f1f1f1; color: #444; display: flex; align-items: center; padding: 0 13px 0 8px; letter-spacing: -.39px; }
.ssearch .cort { width: 22px; height: 22px; margin-right: 8px; color: #111; }
.mic { width: 12px; height: 17px; margin-left: auto; }
.sapps { display: flex; }
.sapps span { width: 46.600px; display: grid; place-items: center; }
.sapps svg { width: 20px; height: 20px; }
.sapps svg.s16 { width: 16px; height: 16px; }
.sapps .active { background: #393d46; border-bottom: 2px solid #76b9ed; }
.sapps .open { background: linear-gradient(#76b9ed, #76b9ed) center bottom / 38px 2px no-repeat; }
.stray { margin-left: auto; display: flex; align-items: center; gap: 7px; padding-right: 4px; border-right: 0; }
.stray svg:first-child { width: 14px; margin-right: 12px; }
svg.chev { width: 13px; height: 8px; }
.stray .chev { margin-right: 2px; }
.clock { display: flex; flex-direction: column; align-items: center; font-size: 11px; line-height: 16px; letter-spacing: -.19px; color: #f0f0f0; }
.notif { position: relative; width: 45px; height: 20px; padding-left: 11px; border-right: 0; }
.notif b { position: absolute; left: 17px; top: 7px; width: 16px; height: 16px; border-radius: 50%; background: #3a3d42; border: 1px solid #888; font-size: 10px; text-align: center; line-height: 14px; }

/* participants */
.people { height: 98px; border-top: 3px solid #191919; background: #191919; display: grid; grid-template-columns: 238px repeat(8, 180px); }
.p { position: relative; padding-top: 25px; display: flex; flex-direction: column; align-items: center; }
.people .a { background: #3d3d3d; } .people .b { background: #424242; } .people .c { background: #383838; } .people .d { background: #323232; } .people .last { background: #464543; }
.self { align-items: flex-end; padding-right: 20px; background: #1a1a1a; }
.av { width: 44px; height: 44px; border-radius: 50%; display: grid; place-items: center; font-weight: 600; font-size: 17px; letter-spacing: -.3px; }
.green { background: #d1ecdf; color: #1e6b45; } .blue { background: #ccd8ea; color: #173a68; } .red { background: #f1d3cd; color: #752b1d; } .yel { background: #fdeecb; color: #82600f; } .tan { background: #f8e8cc; color: #82600f; } .lil { background: #e2ddee; color: #4a4173; } .mint { background: #cfe1d7; color: #1b4a38; } .pink { background: #f5d1de; color: #7b1f44; }
.p label { align-self: stretch; display: flex; align-items: center; margin-top: 4px; height: 20px; padding-left: 15px; color: #fff; font-size: 12px; letter-spacing: -.26px; white-space: nowrap; }
.p label svg { width: 12px; height: 14px; margin-left: 12px; }
.talk { background: radial-gradient(circle at 50% 48%, #6264a7 0, #504f78 32px, #3c3a4c 70px, #383645 100px); }
.talk .av { box-shadow: 0 0 0 1px #f8e8cc, 0 0 0 5px #3c3a55, 0 0 0 9px #9299f7; }
.talk label { letter-spacing: -.43px; z-index: 1; }

/* Windows taskbar */
.task { height: 40px; background: linear-gradient(90deg, #23383f, #213640 35%, #1f3043 65%, #1b2745 90%, #1b2443); display: flex; color: #fff; flex: none; border-bottom: 1px solid #000; }
.tb { width: 48px; display: grid; place-items: center; }
.tb svg.i18 { width: 18px; height: 18px; }
.apps { display: flex; margin-left: 3px; }
.apps span { width: 49px; display: grid; place-items: center; }
.apps svg { width: 24px; height: 24px; }
.apps span:nth-child(2) svg { width: 22px; height: 20px; }
.apps .open { background: linear-gradient(#76b9ed, #76b9ed) center bottom / 40px 2px no-repeat; }
.clock.end { margin-left: auto; padding: 2px 6px 0 0; line-height: 18px; }

/* Teams window */
.thead { height: 48px; background: #464775; display: flex; align-items: center; flex: none; color: #a4a4c2; }
.nv { width: 7px; height: 13px; margin-left: 16px; }
.dimnv { margin-left: 22px; }
.find { width: 1064px; height: 32px; margin-left: 376px; background: #8383a2; border-radius: 2px; color: #4a4a79; display: flex; align-items: center; padding-left: 9px; letter-spacing: -.15px; }
.find svg { width: 15px; height: 15px; margin-right: 7px; }
.hdots { width: 14px; height: 5px; margin-left: 180px; }
.org { margin-left: 17px; width: 39px; font-size: 12px; letter-spacing: -.35px; }
.me { position: relative; width: 32px; height: 32px; border-radius: 50%; background: #9e7f9a; display: grid; place-items: center; }
.me i { position: absolute; right: -1px; bottom: 0; width: 13px; height: 13px; border: 2px solid #464775; border-radius: 50%; background: #8a3f67; }
.tw { margin-left: auto; padding-right: 15px; gap: 28px; color: #a9a9c6; }
.tbody { height: 992px; display: grid; grid-template-columns: 68px 1fr; }
.rail { background: linear-gradient(90deg, #ebebeb 84%, #dcdcdc); display: flex; flex-direction: column; color: #616161; font-size: 9.500px; padding: 4px; }
.rail a { height: 48px; margin-bottom: 8px; padding-top: 6px; display: flex; flex-direction: column; align-items: center; gap: 4px; letter-spacing: -.05px; }
.rail svg { width: 20px; height: 21px; }
.rail .on { height: 48px; padding-right: 2px; border-left: 2px solid #6264a7; color: #6264a7; }
.rail .help { margin: auto 0 4px; }
.doc { display: flex; flex-direction: column; background: #faf9f8; min-width: 0; }
.dhead { height: 60px; flex: none; background: #fff; display: flex; align-items: center; padding-left: 36px; color: #252423; }
.dhead > svg:first-child { width: 16px; height: 18px; }
.dhead h4 { margin: 0 auto 0 20px; font-size: 17px; letter-spacing: -.06px; }
.dhead button { width: 96px; height: 32px; margin-right: 8px; border: 1px solid #d8d6d4; border-radius: 3px; box-shadow: 0 1px 2px rgba(0,0,0,.15); font-weight: 600; }
.dhead button.wide { width: 213px; }
.dhead .ddots { width: 14px; height: 5px; margin: 0 17px 0 9px; }
.viewer { height: 932px; display: grid; grid-template-columns: 1fr 17px; overflow: hidden; }
.pages { padding-left: 422px; overflow: hidden; }
.sheet { width: 992px; background: #fff; box-shadow: 0 0 8px rgba(0,0,0,.22); }
.prev { height: 16px; box-shadow: 0 -2px 8px rgba(0,0,0,.22), 0 8px 0 #e1dfdd; }
.cur { height: 920px; margin-top: 8px; padding: 95px 0 0 94px; font: 20px/23.500px "Liberation Serif", serif; color: #000; white-space: nowrap; }
.bold { font-weight: 700; margin-top: 22px; }
h5 { font: italic 700 26.700px/30px "Liberation Serif", serif; margin: 21px 0 23px; }
.sp { margin-top: 11.500px; }
.vbar .tri-up { border-bottom-color: #505050; }
.vbar .thumb { width: 13px; height: 197px; margin-top: 600px; background: #c1c1c1; }
.tsearch { width: 344px; background: #f2f2f2; border: 1px solid #bbb; border-width: 1px 0; color: #333; display: flex; align-items: center; font-size: 14px; letter-spacing: -.08px; padding-left: 11px; }
.tsearch svg { width: 18px; height: 18px; margin-right: 11px; }
.rt { background: linear-gradient(90deg, #23383f, #213640 50%, #1f3043 80%, #1b2745 92%, #1b2443); }
.tray { margin-left: auto; display: flex; align-items: center; gap: 9px; padding-right: 25px; }
.tray .chev { margin-right: 2px; }
.tray svg:nth-child(2) { width: 14px; }
.tray .clock { line-height: 18px; }
.tray .note { margin-left: 10px; }
```
